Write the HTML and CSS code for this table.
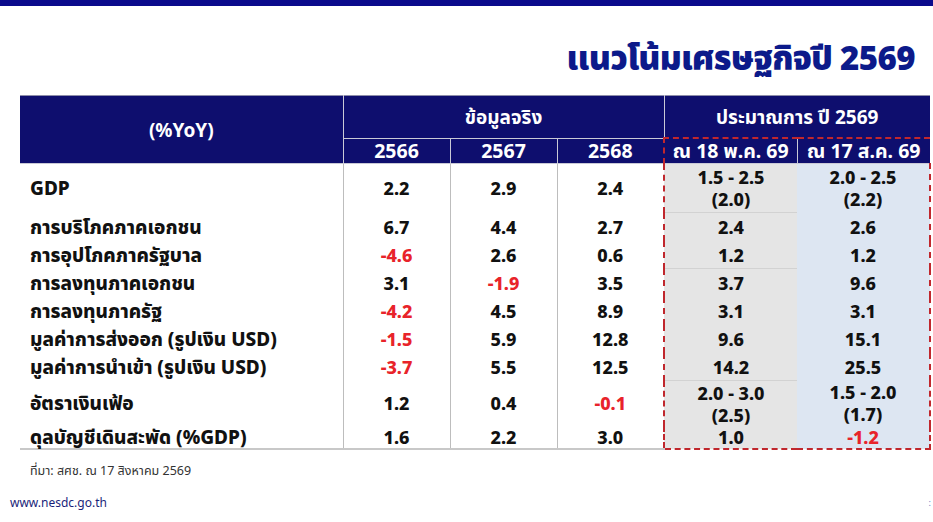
FILE: index.html
```html
<!DOCTYPE html>
<html lang="th">
<head>
<meta charset="utf-8">
<title>แนวโน้มเศรษฐกิจปี 2569</title>
<link rel="stylesheet" href="styles.css">
</head>
<body>
<div class="topbar"></div>
<header class="head">
  <h1 class="title">แนวโน้มเศรษฐกิจปี 2569</h1>
</header>
<main class="main">
  <table class="tbl">
    <colgroup>
      <col class="c-label"><col class="c-yr"><col class="c-yr"><col class="c-yr"><col class="c-fc1"><col class="c-fc2">
    </colgroup>
    <thead>
      <tr class="h1">
        <th rowspan="2" class="h-label">(%YoY)</th>
        <th colspan="3">ข้อมูลจริง</th>
        <th colspan="2">ประมาณการ ปี 2569</th>
      </tr>
      <tr class="h2">
        <th>2566</th><th>2567</th><th>2568</th>
        <th class="fc1">ณ 18 พ.ค. 69</th><th class="fc2">ณ 17 ส.ค. 69</th>
      </tr>
    </thead>
    <tbody>
      <tr class="r-gdp line">
        <td class="lbl">GDP</td><td>2.2</td><td>2.9</td><td>2.4</td>
        <td class="fc1">1.5 - 2.5<br>(2.0)</td><td class="fc2">2.0 - 2.5<br>(2.2)</td>
      </tr>
      <tr class="r">
        <td class="lbl">การบริโภคภาคเอกชน</td><td>6.7</td><td>4.4</td><td>2.7</td>
        <td class="fc1">2.4</td><td class="fc2">2.6</td>
      </tr>
      <tr class="r line">
        <td class="lbl">การอุปโภคภาครัฐบาล</td><td class="neg">-4.6</td><td>2.6</td><td>0.6</td>
        <td class="fc1">1.2</td><td class="fc2">1.2</td>
      </tr>
      <tr class="r">
        <td class="lbl">การลงทุนภาคเอกชน</td><td>3.1</td><td class="neg">-1.9</td><td>3.5</td>
        <td class="fc1">3.7</td><td class="fc2">9.6</td>
      </tr>
      <tr class="r">
        <td class="lbl">การลงทุนภาครัฐ</td><td class="neg">-4.2</td><td>4.5</td><td>8.9</td>
        <td class="fc1">3.1</td><td class="fc2">3.1</td>
      </tr>
      <tr class="r">
        <td class="lbl">มูลค่าการส่งออก (รูปเงิน USD)</td><td class="neg">-1.5</td><td>5.9</td><td>12.8</td>
        <td class="fc1">9.6</td><td class="fc2">15.1</td>
      </tr>
      <tr class="r line">
        <td class="lbl">มูลค่าการนำเข้า (รูปเงิน USD)</td><td class="neg">-3.7</td><td>5.5</td><td>12.5</td>
        <td class="fc1">14.2</td><td class="fc2">25.5</td>
      </tr>
      <tr class="r-inf">
        <td class="lbl">อัตราเงินเฟ้อ</td><td>1.2</td><td>0.4</td><td class="neg">-0.1</td>
        <td class="fc1">2.0 - 3.0<br>(2.5)</td><td class="fc2">1.5 - 2.0<br>(1.7)</td>
      </tr>
      <tr class="r-last">
        <td class="lbl">ดุลบัญชีเดินสะพัด (%GDP)</td><td>1.6</td><td>2.2</td><td>3.0</td>
        <td class="fc1">1.0</td><td class="fc2 neg">-1.2</td>
      </tr>
    </tbody>
  </table>
  <p class="note">ที่มา: สศช. ณ 17 สิงหาคม 2569</p>
</main>
<footer class="foot">
  <span class="url">www.nesdc.go.th</span>
  <span class="pgno">:</span>
</footer>
</body>
</html>
```
FILE: styles.css
```css
html, body {
  margin: 0;
  padding: 0;
  background: #ffffff;
  font-family: "Noto Sans", "Noto Sans Thai", sans-serif;
  color: #111111;
}
body {
  width: 933px;
  height: 522px;
  overflow: hidden;
}
.topbar {
  height: 6px;
  background: #0b0b8c;
}
.head {
  display: flex;
  justify-content: flex-end;
  height: 89px;
  padding-right: 18px;
  box-sizing: border-box;
  padding-top: 31px;
}
.title {
  margin: 0;
  font-size: 33px;
  line-height: 42px;
  font-weight: 900;
  color: #0c1a8a;
  letter-spacing: -0.6px;
}
.main {
  padding-left: 20px;
}
.tbl {
  width: 910px;
  border-collapse: collapse;
  table-layout: fixed;
  font-weight: 800;
  font-size: 18px;
}
.c-label { width: 323px; }
.c-yr { width: 107px; }
.c-fc1 { width: 133px; }
.c-fc2 { width: 133px; }
.tbl th {
  background: #0e0e6e;
  color: #ffffff;
  font-size: 19px;
  font-weight: 700;
  border: 1px solid #c9c9d6;
  padding: 0;
  text-align: center;
  vertical-align: middle;
  line-height: 22px;
}
.tbl thead tr:first-child th { border-top: 1px solid #8e8eaa; }
.tbl .h-label { border-left: none; }
.h1 th { height: 41px; }
.h2 th { height: 24px; line-height: 20px; }
.tbl .h2 th { font-size: 19.5px; }
.tbl th:last-child { border-right: none; }
.tbl td {
  padding: 0;
  text-align: center;
  vertical-align: middle;
  border-left: 1px solid #bdbdbd;
  line-height: 22px;
}
.tbl td.lbl {
  text-align: left;
  padding-left: 10px;
  border-left: none;
  font-size: 19px;
  white-space: nowrap;
}
.tbl td.fc1 { background: #e5e5e5; }
.tbl td.fc2 { background: #dde6f2; border-left: none; }
.tbl .fc1 { border-left: 2px dashed #c0272d; }
.tbl .fc2 { border-right: 2px dashed #c0272d; }
.tbl .h2 .fc1, .tbl .h2 .fc2 { border-top: 2px dashed #c0272d; }
.tbl .h2 .fc2 { border-left: 1px solid #c9c9d6; }
.r-gdp td { height: 48px; }
.r td { height: 28px; }
.r.line td { height: 27px; }
.r-inf td { height: 45px; }
.r-last td { height: 22px; border-bottom: 2px solid #c8c8c8; }
.r-last .fc1, .r-last .fc2 { border-bottom: 2px dashed #c0272d; }
.line td.fc1 { border-bottom: 1px solid #d2d2d2; }
.neg { color: #e8232a; }
.note {
  margin: 12px 0 0 10px;
  font-size: 12.5px;
  font-weight: 400;
  line-height: 18px;
  color: #333333;
}
.foot {
  display: flex;
  justify-content: space-between;
  align-items: center;
  padding: 15px 2px 0 10px;
}
.url {
  font-size: 12px;
  line-height: 16px;
  color: #1a1f7a;
}
.pgno {
  font-size: 9px;
  line-height: 12px;
  color: #6a86c8;
}
```
